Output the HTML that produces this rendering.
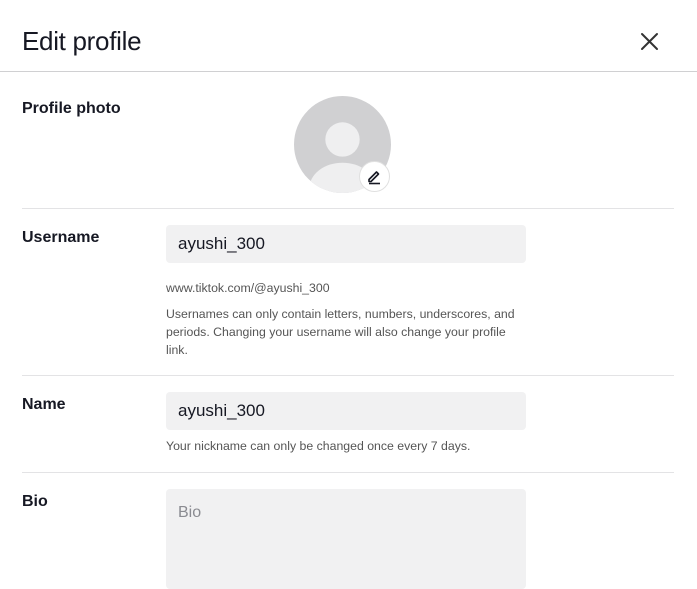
<!DOCTYPE html>
<html><head><meta charset="utf-8"><style>
*{margin:0;padding:0;box-sizing:border-box}
body{width:697px;height:568px;overflow:hidden;background:#fff;font-family:"Liberation Sans",Arial,sans-serif;color:#161823;position:relative}
.a{position:absolute}
.t{left:22px;top:26px;font-size:26px;line-height:30px;letter-spacing:-0.3px}
.hl{left:0;top:71px;width:697px;height:1px;background:#d0d0d2}
.dv{left:22px;width:652px;height:1px;background:#e3e3e5}
.lb{left:22px;font-size:16px;line-height:20px;color:#161823;font-weight:600}
.in{left:166px;width:360px;background:#f1f1f2;border-radius:4px;font-size:17px;padding:0 12px;line-height:38px;color:#161823}
.s{left:166px;font-size:12.3px;line-height:18px;color:#555;width:360px}
</style></head><body>
<div class="a t">Edit profile</div>
<svg class="a" style="left:640px;top:32px" width="19" height="19" viewBox="0 0 19 19"><path d="M2 2L17 17M17 2L2 17" stroke="#333" stroke-width="2" stroke-linecap="round"/></svg>
<div class="a hl"></div>
<div class="a lb" style="top:99px">Profile photo</div>
<svg class="a" style="left:294px;top:96px" width="97" height="97" viewBox="0 0 96 96">
<defs><clipPath id="c"><circle cx="48" cy="48" r="48"/></clipPath></defs>
<circle cx="48" cy="48" r="48" fill="#d0d0d2"/>
<g clip-path="url(#c)"><circle cx="48" cy="43" r="17" fill="#efeff0"/><ellipse cx="48" cy="92" rx="33" ry="26" fill="#efeff0"/></g>
</svg>
<div class="a" style="left:359px;top:161px;width:31px;height:31px;border-radius:50%;background:#fff;border:1px solid #e0e0e0"></div>
<svg class="a" style="left:366px;top:168px" width="17" height="17" viewBox="0 0 17 17"><path d="M3 11.5L10.5 4L12.5 6L5 13.5H3Z" fill="none" stroke="#161823" stroke-width="1.6" stroke-linejoin="round"/><path d="M3 15.5H14" stroke="#161823" stroke-width="1.6"/></svg>
<div class="a dv" style="top:208px"></div>
<div class="a lb" style="top:228px">Username</div>
<div class="a in" style="top:225px;height:38px">ayushi_300</div>
<div class="a s" style="top:279px">www.tiktok.com/@ayushi_300</div>
<div class="a s" style="top:305px">Usernames can only contain letters, numbers, underscores, and periods. Changing your username will also change your profile link.</div>
<div class="a dv" style="top:375px"></div>
<div class="a lb" style="top:395px">Name</div>
<div class="a in" style="top:392px;height:38px">ayushi_300</div>
<div class="a s" style="top:437px">Your nickname can only be changed once every 7 days.</div>
<div class="a dv" style="top:472px"></div>
<div class="a lb" style="top:492px">Bio</div>
<div class="a in" style="top:489px;height:100px;padding-top:5px;color:#8a8b91;font-size:16px;line-height:38px">Bio</div>
</body></html>
